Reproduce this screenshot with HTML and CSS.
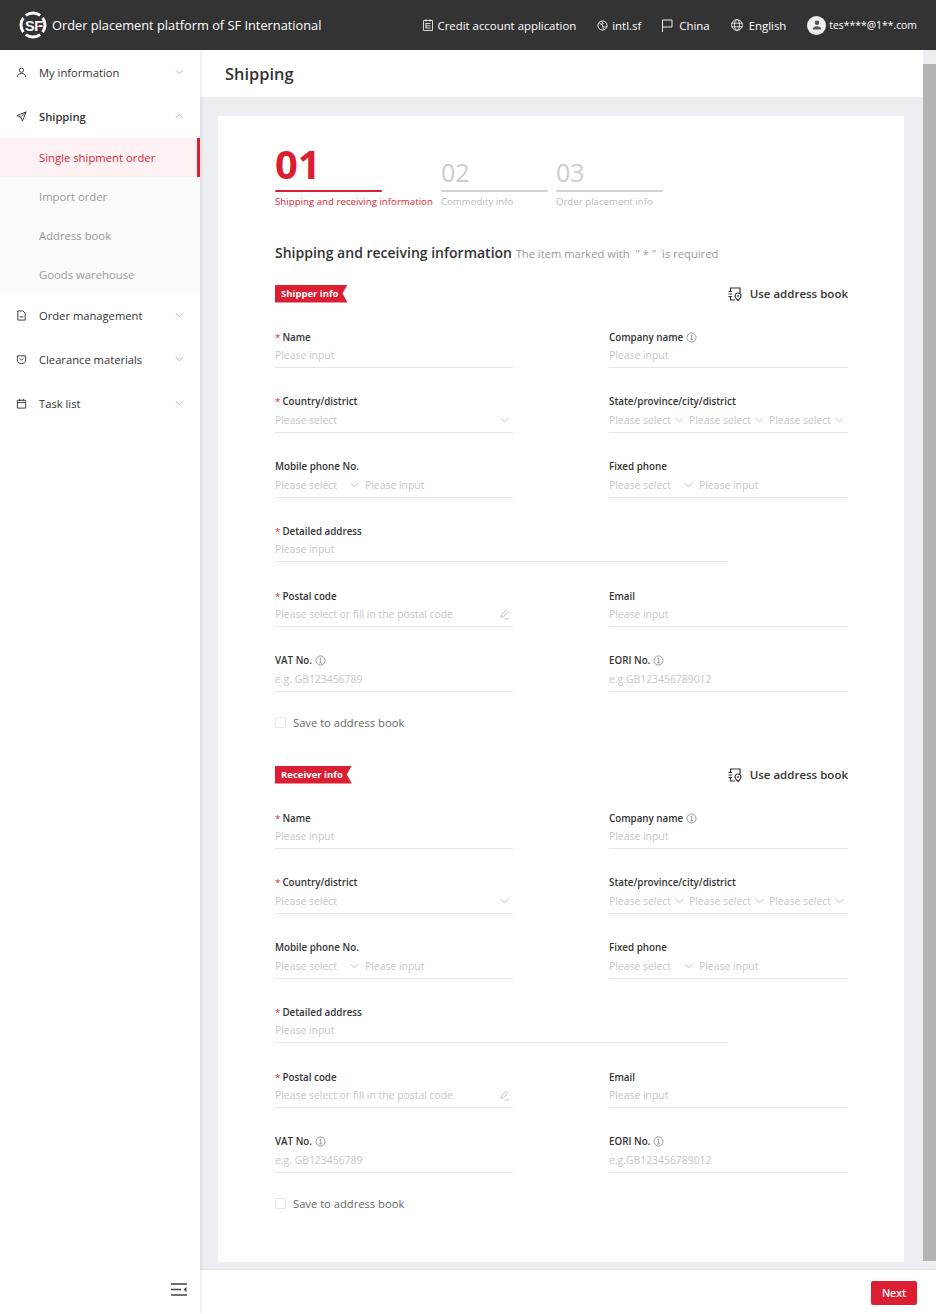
FILE: index.html

```html
<!DOCTYPE html>
<html lang="en">
<head>
    <meta charset="UTF-8">
    <title>Shipping</title>
    <link rel="stylesheet" href="styles.css">
</head>
<body>
    <svg class="defs" width="0" height="0">
        <symbol id="ic-chev" viewBox="0 0 10 6"><path d="M1 1l4 4 4-4" fill="none" stroke="currentColor" stroke-width="1"/></symbol>
        <symbol id="ic-info" viewBox="0 0 12 12"><circle cx="6" cy="6" r="5" fill="none" stroke="currentColor" stroke-width=".8"/><path d="M5 4l1.200-.6v5M4.600 8.600h3" fill="none" stroke="currentColor" stroke-width=".8"/></symbol>
        <symbol id="ic-pen" viewBox="0 0 12 12"><path d="M2 9l.5-2.500L7.500 1.500l2 2L4.500 8.500zM6 10.800h5" fill="none" stroke="currentColor" stroke-width=".8"/></symbol>
        <symbol id="ic-book" viewBox="0 0 14 14"><path d="M2.500 4V1H12v5M2.500 10v3H7" fill="none" stroke="currentColor" stroke-width="1.200"/><path d="M.5 4.500h3.500M.5 7h3.500M.5 9.500h3.500" stroke="currentColor" stroke-width="1.200"/><path d="M10 13.500c-1.800-1.700-3-3-3-4.500a3 3 0 0 1 6 0c0 1.500-1.200 2.800-3 4.500z" fill="none" stroke="currentColor" stroke-width="1.200"/><circle cx="10" cy="9" r=".9" fill="currentColor"/></symbol>
    </svg>

    <header class="topbar">
        <div class="brand">
            <svg class="logo" viewBox="0 0 28 28" width="28" height="28">
                <path d="M6.800 4.400A12 12 0 0 1 21.200 4.400M23.600 6.800A12 12 0 0 1 23.600 21.200M21.200 23.600A12 12 0 0 1 6.800 23.600M4.400 21.200A12 12 0 0 1 4.400 6.800" fill="none" stroke="#fff" stroke-width="3"/>
                <text x="6" y="19.500" class="logo-text">SF</text>
                <circle cx="19" cy="14.500" r="1.100" fill="#dc1e32"/>
            </svg>
            <span class="brand-name">Order placement platform of SF International</span>
        </div>
        <nav class="topnav">
            <a class="topnav-item">
                <svg width="10" height="12" viewBox="0 0 10 12"><path d="M.5 1.500h9v10h-9zM3 .2v2.500M7 .2v2.500M2.500 4.500h5M2.500 6.800h5M2.500 9h5M3 4.500V9" fill="none" stroke="#fff" stroke-width=".8"/></svg>
                Credit account application
            </a>
            <a class="topnav-item">
                <svg width="11" height="11" viewBox="0 0 12 12"><circle cx="6" cy="6" r="5" fill="none" stroke="#fff"/><path d="M1 4c2-1 4 0 5 2s3 2 5 1M5 1.500l2 2.500-3 1M6 6l1 4" fill="none" stroke="#fff" stroke-width=".9"/></svg>
                intl.sf
            </a>
            <a class="topnav-item">
                <svg class="flag" width="11" height="13" viewBox="0 0 11 13"><path d="M.5 13V1h9.500v7H.5" fill="none" stroke="#fff" stroke-width=".9"/></svg>
                China
            </a>
            <a class="topnav-item">
                <svg class="globe" width="12" height="12" viewBox="0 0 12 12"><g fill="none" stroke="#fff" stroke-width=".8"><circle cx="6" cy="6" r="5.400"/><ellipse cx="6" cy="6" rx="2.500" ry="5.400"/><path d="M.6 4.200h10.800M.6 7.800h10.800"/></g></svg>
                English
            </a>
            <a class="topnav-item user">
                <span class="avatar"><svg width="10" height="10" viewBox="0 0 10 10"><circle cx="5" cy="2.800" r="2.200" fill="#555"/><path d="M.8 9.500c0-2.500 2-3.200 4.200-3.200s4.200.7 4.200 3.200z" fill="#555"/></svg></span>
                tes****@1**.com
            </a>
        </nav>
    </header>

    <div class="layout">
        <aside class="sidebar">
            <div class="menu-row">
                <svg class="menu-icon" viewBox="0 0 12 12"><circle cx="6" cy="3.500" r="2.300"/><path d="M1.500 11c0-3 2-4 4.500-4s4.500 1 4.500 4"/></svg>
                <span>My information</span>
                <svg class="menu-chev"><use href="#ic-chev"/></svg>
            </div>
            <div class="menu-row is-open">
                <svg class="menu-icon" viewBox="0 0 12 12"><path d="M11 1L1 5l4 1.500L7 11zM5 6.500L11 1"/></svg>
                <span>Shipping</span>
                <svg class="menu-chev flip"><use href="#ic-chev"/></svg>
            </div>
            <div class="submenu">
                <div class="sub-row active">Single shipment order</div>
                <div class="sub-row">Import order</div>
                <div class="sub-row">Address book</div>
                <div class="sub-row">Goods warehouse</div>
            </div>
            <div class="menu-row">
                <svg class="menu-icon" viewBox="0 0 12 12"><path d="M2 1h5.500L10 3.500V11H2zM4 7.500h4"/></svg>
                <span>Order management</span>
                <svg class="menu-chev"><use href="#ic-chev"/></svg>
            </div>
            <div class="menu-row">
                <svg class="menu-icon" viewBox="0 0 12 12"><path d="M1.500 2h9v4.500a4.500 4 0 0 1-9 0zM4 5l2 1.500L8 5"/></svg>
                <span>Clearance materials</span>
                <svg class="menu-chev"><use href="#ic-chev"/></svg>
            </div>
            <div class="menu-row">
                <svg class="menu-icon" viewBox="0 0 12 12"><path d="M1.500 2.500h9V11h-9zM1.500 5h9M4 1v2.500M8 1v2.500"/></svg>
                <span>Task list</span>
                <svg class="menu-chev"><use href="#ic-chev"/></svg>
            </div>
            <svg class="collapse" width="16" height="13" viewBox="0 0 16 13"><path d="M0 1h16M0 6.500h10M0 12h16" stroke="#444" stroke-width="1.600"/><path d="M15.500 4v5L12.500 6.500z" fill="#444"/></svg>
        </aside>

        <main class="main">
            <div class="page-title">Shipping</div>
            <div class="scroll-area">
                <div class="card">
                    <div class="steps">
                        <div class="step active">
                            <div class="step-num">01</div>
                            <div class="step-line"></div>
                            <div class="step-text">Shipping and receiving information</div>
                        </div>
                        <div class="step">
                            <div class="step-num">02</div>
                            <div class="step-line"></div>
                            <div class="step-text">Commodity info</div>
                        </div>
                        <div class="step">
                            <div class="step-num">03</div>
                            <div class="step-line"></div>
                            <div class="step-text">Order placement info</div>
                        </div>
                    </div>

                    <h2 class="form-title">Shipping and receiving information <small>The item marked with &nbsp;" * " &nbsp;is required</small></h2>

                    <section class="block">
                        <div class="block-head">
                            <span class="ribbon">Shipper info</span>
                            <a class="book-link"><svg width="14" height="14"><use href="#ic-book"/></svg>Use address book</a>
                        </div>
                        <div class="form-grid">
                            <div class="field"><label><i>*</i>Name</label><div class="input">Please input</div></div>
                            <div class="field"><label>Company name<svg class="info"><use href="#ic-info"/></svg></label><div class="input">Please input</div></div>
                            <div class="field"><label><i>*</i>Country/district</label><div class="input"><span class="grow">Please select</span><svg class="chev"><use href="#ic-chev"/></svg></div></div>
                            <div class="field"><label>State/province/city/district</label><div class="input triple"><span>Please select</span><svg class="chev"><use href="#ic-chev"/></svg><span>Please select</span><svg class="chev"><use href="#ic-chev"/></svg><span>Please select</span><svg class="chev"><use href="#ic-chev"/></svg></div></div>
                            <div class="field"><label>Mobile phone No.</label><div class="input"><span class="code">Please select</span><svg class="chev"><use href="#ic-chev"/></svg><span class="after-code">Please input</span></div></div>
                            <div class="field"><label>Fixed phone</label><div class="input"><span class="code">Please select</span><svg class="chev"><use href="#ic-chev"/></svg><span class="after-code">Please input</span></div></div>
                            <div class="field wide"><label><i>*</i>Detailed address</label><div class="input">Please input</div></div>
                            <div class="field"><label><i>*</i>Postal code</label><div class="input"><span class="grow">Please select or fill in the postal code</span><svg class="pen"><use href="#ic-pen"/></svg></div></div>
                            <div class="field"><label>Email</label><div class="input">Please input</div></div>
                            <div class="field"><label>VAT No.<svg class="info"><use href="#ic-info"/></svg></label><div class="input">e.g. GB123456789</div></div>
                            <div class="field"><label>EORI No.<svg class="info"><use href="#ic-info"/></svg></label><div class="input">e.g.GB123456789012</div></div>
                        </div>
                        <div class="save-row"><span class="checkbox"></span>Save to address book</div>
                    </section>

                    <section class="block">
                        <div class="block-head">
                            <span class="ribbon">Receiver info</span>
                            <a class="book-link"><svg width="14" height="14"><use href="#ic-book"/></svg>Use address book</a>
                        </div>
                        <div class="form-grid">
                            <div class="field"><label><i>*</i>Name</label><div class="input">Please input</div></div>
                            <div class="field"><label>Company name<svg class="info"><use href="#ic-info"/></svg></label><div class="input">Please input</div></div>
                            <div class="field"><label><i>*</i>Country/district</label><div class="input"><span class="grow">Please select</span><svg class="chev"><use href="#ic-chev"/></svg></div></div>
                            <div class="field"><label>State/province/city/district</label><div class="input triple"><span>Please select</span><svg class="chev"><use href="#ic-chev"/></svg><span>Please select</span><svg class="chev"><use href="#ic-chev"/></svg><span>Please select</span><svg class="chev"><use href="#ic-chev"/></svg></div></div>
                            <div class="field"><label>Mobile phone No.</label><div class="input"><span class="code">Please select</span><svg class="chev"><use href="#ic-chev"/></svg><span class="after-code">Please input</span></div></div>
                            <div class="field"><label>Fixed phone</label><div class="input"><span class="code">Please select</span><svg class="chev"><use href="#ic-chev"/></svg><span class="after-code">Please input</span></div></div>
                            <div class="field wide"><label><i>*</i>Detailed address</label><div class="input">Please input</div></div>
                            <div class="field"><label><i>*</i>Postal code</label><div class="input"><span class="grow">Please select or fill in the postal code</span><svg class="pen"><use href="#ic-pen"/></svg></div></div>
                            <div class="field"><label>Email</label><div class="input">Please input</div></div>
                            <div class="field"><label>VAT No.<svg class="info"><use href="#ic-info"/></svg></label><div class="input">e.g. GB123456789</div></div>
                            <div class="field"><label>EORI No.<svg class="info"><use href="#ic-info"/></svg></label><div class="input">e.g.GB123456789012</div></div>
                        </div>
                        <div class="save-row"><span class="checkbox"></span>Save to address book</div>
                    </section>
                </div>
                <div class="scrollbar"><div class="thumb"></div></div>
            </div>
            <div class="footer"><button class="btn-next">Next</button></div>
        </main>
    </div>
</body>
</html>
```

FILE: styles.css

```css
* {
    box-sizing: border-box;
}

html, body {
    margin: 0;
    height: 100%;
    overflow: hidden;
}

body {
    font-family: 'Open Sans', 'Noto Sans', sans-serif;
    font-size: 11px;
    color: #333;
    background: #fff;
}

.defs {
    position: absolute;
}

/* Top bar */
.topbar {
    height: 50px;
    background: #333;
    color: #fff;
    display: flex;
    align-items: center;
    justify-content: space-between;
    padding: 0 19px;
}

.brand {
    display: flex;
    align-items: center;
    gap: 5px;
}

.logo-text {
    font-family: 'Liberation Sans', sans-serif;
    font-size: 14.500px;
    font-weight: 700;
    letter-spacing: -.5px;
    fill: #fff;
}

.brand-name {
    font-size: 12.800px;
}

.topnav {
    display: flex;
    align-items: center;
    gap: 21px;
}

.topnav-item {
    display: flex;
    align-items: center;
    gap: 4px;
    font-size: 11.400px;
}

.topnav-item .flag,
.topnav-item .globe {
    margin-right: 2px;
}

.user {
    gap: 3px;
    font-size: 10.400px;
}

.avatar {
    width: 19px;
    height: 19px;
    border-radius: 50%;
    background: #eee;
    display: flex;
    align-items: center;
    justify-content: center;
}

/* Layout */
.layout {
    display: flex;
    height: 1264px;
}

.sidebar {
    width: 200px;
    flex-shrink: 0;
    position: relative;
    background: #fff;
    box-shadow: 1px 0 4px rgba(0, 0, 0, .1);
    z-index: 2;
}

.menu-row {
    height: 44px;
    display: flex;
    align-items: center;
    padding: 0 16px;
    font-size: 11.200px;
    color: #333;
}

.menu-row span {
    flex: 1;
    margin-left: 12px;
}

.menu-row.is-open {
    font-weight: 600;
}

.menu-icon {
    width: 11px;
    height: 11px;
    fill: none;
    stroke: #333;
    stroke-width: 1;
}

.menu-chev {
    width: 9px;
    height: 6px;
    color: #aaa;
    margin-top: -1px;
}

.menu-chev.flip {
    transform: rotate(180deg);
}

.submenu {
    background: #fafafa;
    margin-bottom: -1px;
}

.sub-row {
    height: 39px;
    line-height: 39px;
    padding-left: 39px;
    font-size: 11.300px;
    color: #999;
}

.sub-row.active {
    color: #dc1e32;
    background: #fdf1f3;
    border-right: 3px solid #dc1e32;
}

.collapse {
    position: absolute;
    left: 171px;
    bottom: 18px;
}

/* Main */
.main {
    flex: 1;
    min-width: 0;
    display: flex;
    flex-direction: column;
}

.page-title {
    height: 47px;
    flex-shrink: 0;
    background: #fff;
    padding-left: 25px;
    line-height: 48px;
    font-size: 16.400px;
    font-weight: 600;
    color: #333;
}

.scroll-area {
    flex: 1;
    min-height: 0;
    background: #edeef2;
    position: relative;
    padding: 19px 32px 0 18px;
}

.scrollbar {
    position: absolute;
    top: -47px;
    right: 0;
    bottom: 0;
    width: 13px;
    background: #edeef2;
    padding: 14px 0 9px;
}

.thumb {
    height: 100%;
    background: #b3b3b3;
}

.card {
    width: 686px;
    height: 1146px;
    background: #fff;
    padding: 25px 56px 0 57px;
}

/* Steps */
.steps {
    display: flex;
    align-items: flex-end;
    gap: 8px;
}

.step-num {
    font-size: 25px;
    line-height: 30px;
    color: #ccc;
}

.step.active .step-num {
    font-size: 40px;
    line-height: 46px;
    font-weight: 700;
    color: #dc1e32;
}

.step-line {
    width: 107px;
    height: 2px;
    border-radius: 1px;
    background: #d2d2d2;
    margin-top: 3px;
}

.step.active .step-line {
    background: #dc1e32;
}

.step-text {
    font-size: 9.700px;
    line-height: 20px;
    color: #bbb;
}

.step.active .step-text {
    color: #dc1e32;
}

.form-title {
    margin: 31px 0 0;
    font-size: 14px;
    line-height: 20px;
    font-weight: 600;
    color: #333;
}

.form-title small {
    font-size: 11.200px;
    font-weight: 400;
    color: #999;
}

/* Form block */
.block {
    height: 481px;
    margin-top: 20px;
}

.block + .block {
    margin-top: 0;
}

.block-head {
    display: flex;
    align-items: center;
    justify-content: space-between;
    height: 19px;
}

.ribbon {
    height: 18px;
    line-height: 18px;
    padding: 0 9px 0 6px;
    background: #dc1e32;
    color: #fff;
    font-size: 9.500px;
    font-weight: 700;
    clip-path: polygon(0 0, 100% 0, calc(100% - 5px) 50%, 100% 100%, 0 100%);
}

.book-link {
    display: flex;
    align-items: center;
    gap: 8px;
    font-size: 11.500px;
    font-weight: 600;
    color: #333;
}

.form-grid {
    display: grid;
    grid-template-columns: 238px 239px;
    justify-content: space-between;
    grid-auto-rows: 64.800px;
    margin-top: 25px;
}

.field label {
    display: flex;
    align-items: center;
    height: 18px;
    font-size: 9.800px;
    font-weight: 600;
    color: #333;
}

.field label i {
    font-style: normal;
    font-weight: 400;
    color: #dc1e32;
    margin-right: 2px;
}

.field.wide {
    grid-column: 1 / 3;
    width: 453px;
}

.input {
    height: 22px;
    padding-bottom: 3px;
    display: flex;
    align-items: center;
    border-bottom: 1px solid #e3e4e8;
    font-size: 10.400px;
    color: #c4c6cc;
    white-space: nowrap;
}

.grow {
    flex: 1;
}

.code {
    width: 75px;
}

.after-code {
    margin-left: 6px;
}

.triple span {
    width: 61px;
}

.chev {
    width: 9px;
    height: 6px;
    color: #bbb;
    flex-shrink: 0;
}

.grow + .chev {
    margin-right: 4px;
}

.triple .chev {
    margin: 0 5px;
}

.pen {
    width: 11px;
    height: 11px;
    color: #aaa;
    margin-right: 3px;
}

.info {
    width: 11px;
    height: 11px;
    color: #777;
    margin-left: 3px;
}

.save-row {
    display: flex;
    align-items: center;
    gap: 7px;
    font-size: 11.200px;
    color: #666;
    height: 20px;
    margin-top: -4px;
}

.checkbox {
    width: 11px;
    height: 11px;
    border: 1px solid #e6e6e6;
    border-radius: 2px;
}

/* Footer */
.footer {
    height: 44px;
    flex-shrink: 0;
    background: #fff;
    box-shadow: 0 -1px 2px rgba(0, 0, 0, .06);
    display: flex;
    align-items: center;
    justify-content: flex-end;
    padding: 2px 19px 0 0;
    position: relative;
}

.btn-next {
    width: 46px;
    height: 24px;
    border: none;
    border-radius: 2px;
    background: #dc1e32;
    color: #fff;
    font-family: inherit;
    font-size: 10.500px;
    font-weight: 600;
    padding: 0;
}
```
